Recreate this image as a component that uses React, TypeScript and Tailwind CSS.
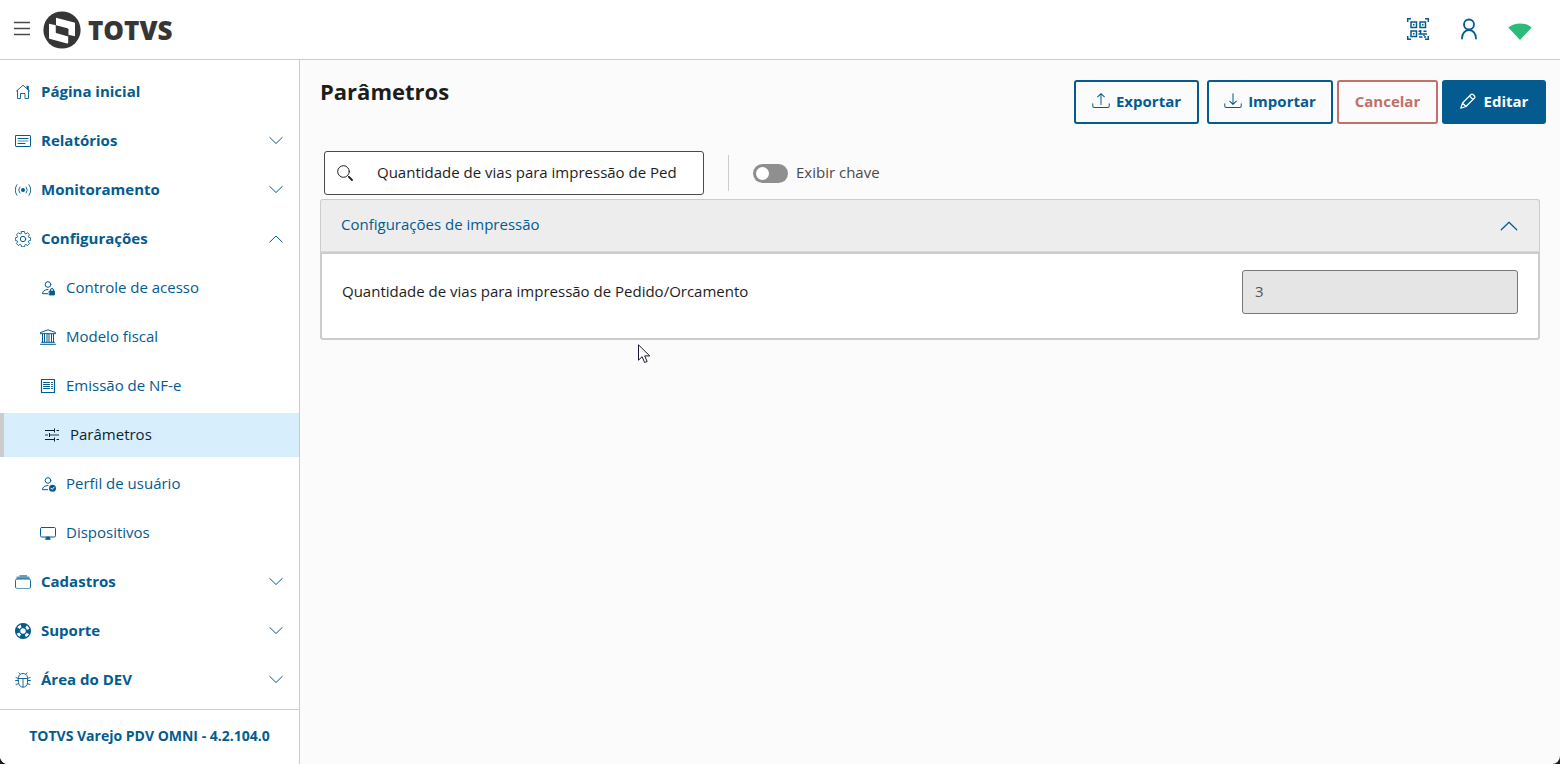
import React, { useState } from "react";

type IconProps = { className?: string; children: React.ReactNode };

function Icon({ className = "size-4", children }: IconProps) {
  return (
    <svg
      viewBox="0 0 16 16"
      className={`${className} shrink-0`}
      fill="none"
      stroke="currentColor"
      strokeLinecap="round"
      strokeLinejoin="round"
      aria-hidden="true"
    >
      {children}
    </svg>
  );
}

const HomeIcon = () => (
  <Icon>
    <path d="M1.500 7 8 1.300 14.500 7M2.500 6.500v8h3v-5h4.500v5h3.500v-8" strokeWidth=".9" />
    <path d="M12 2h1.500v4L12 4.700z" fill="currentColor" strokeWidth=".5" />
  </Icon>
);

const ReportIcon = () => (
  <Icon>
    <rect x=".5" y="2.500" width="15" height="11" rx=".6" />
    <path d="M3 5.500h10M3 10.500h7" />
    <path d="M3 8h10" opacity=".7" />
  </Icon>
);

const BroadcastIcon = () => (
  <Icon>
    <circle cx="8" cy="8" r="2" fill="currentColor" stroke="none" />
    <path d="M4.800 5a4.800 4.800 0 0 0 0 6M11.200 5a4.800 4.800 0 0 1 0 6M2 2.700a8.600 8.600 0 0 0 0 10.600M14 2.700a8.600 8.600 0 0 1 0 10.600" strokeWidth=".9" />
  </Icon>
);

const GearIcon = () => (
  <Icon>
    <circle cx="8" cy="8" r="2.700" />
    <path d="M6.600.5h2.800l.5 2 .9.400 1.800-1.100 1.900 1.900-1.100 1.800.4.900 1.900.4v2.600l-1.900.5-.4.900 1.100 1.800-1.900 1.900-1.800-1.100-.9.400-.5 2H6.600l-.5-2-.9-.4-1.800 1.100-1.900-1.900 1.100-1.800-.4-.9-1.900-.5V6.800l1.900-.4.4-.9-1.100-1.800 1.900-1.900 1.800 1.100.9-.4z" strokeWidth=".9" />
  </Icon>
);

const UserLockIcon = () => (
  <Icon>
    <circle cx="8" cy="4.500" r="2.800" />
    <path d="M8 9.500c-3.500 0-5.500 1.800-5.500 4.200h5.200" />
    <rect x="9.500" y="11" width="5" height="4" fill="currentColor" strokeWidth=".8" />
    <path d="M10.500 11v-1a1.500 1.500 0 0 1 3 0v1" />
  </Icon>
);

const UserCheckIcon = () => (
  <Icon>
    <circle cx="8" cy="4.500" r="2.800" />
    <path d="M8 9.500c-3.500 0-5.500 1.800-5.500 4.200h5.200" />
    <circle cx="12.500" cy="12.200" r="3.500" fill="currentColor" stroke="none" />
    <path d="m11 12.200 1.200 1.200 1.900-2.200" stroke="#fff" />
  </Icon>
);

const BankIcon = () => (
  <Icon>
    <path d="M.5 3.500 8 .8l7.500 2.700v1.200H.5z" />
    <path d="M2.500 5v8M4.500 5v8M7 5v8M9 5v8M11.500 5v8M13.500 5v8M1.500 13.300h13M.5 15.300h15" />
  </Icon>
);

const InvoiceIcon = () => (
  <Icon>
    <rect x="1.500" y="1.500" width="13" height="13" strokeWidth="1.200" />
    <path d="M3.500 4.500h6M3.500 6.500h6M3.500 8.500h6M3.500 10.500h6M11.500 4.500h1M11.500 6.500h1M11.500 8.500h1M11.500 10.500h1" />
  </Icon>
);

const SlidersIcon = () => (
  <Icon>
    <path d="M1 3.500h9M12.500 3.500H15M1 12.500h9M12.500 12.500H15M10.500 1.500v4M5.500 6v4M10.500 10.500v4" strokeLinecap="butt" />
    <path d="M1 8h3M5.500 8H15" strokeLinecap="butt" strokeWidth="1.500" opacity=".6" />
  </Icon>
);

const DisplayIcon = () => (
  <Icon>
    <rect x=".5" y="2.500" width="15" height="9.500" rx="1.200" />
    <path d="M6.500 12h3l.8 2.500H5.700z" fill="currentColor" strokeWidth=".6" />
  </Icon>
);

const CollectionIcon = () => (
  <Icon>
    <path d="M4.500 1h7.500v1.500h2.500V5h-13V2.500h3z" fill="currentColor" stroke="none" opacity=".6" />
    <path d="M.5 13V6.500a1.500 1.500 0 0 1 1.500-1.500h12A1.500 1.500 0 0 1 15.500 6.500V13" strokeWidth=".9" />
    <path d="M.5 13a1.500 1.500 0 0 0 1.500 1.500h12a1.500 1.500 0 0 0 1.500-1.500" opacity=".6" />
  </Icon>
);

const LifebuoyIcon = () => (
  <Icon>
    <circle cx="8" cy="8" r="7.400" strokeWidth="1.200" />
    <circle cx="8" cy="8" r="3.300" strokeWidth="1.200" />
    <circle cx="8" cy="8" r="5.400" strokeWidth="4.200" strokeDasharray="5.200 3.282" strokeDashoffset="2.600" strokeLinecap="butt" />
  </Icon>
);

const BugIcon = () => (
  <Icon>
    <path d="M3.500 6.500h9v4.200a4.500 4.500 0 0 1-9 0zM3.500 6.500v-1a4.500 4 0 0 1 9 0v1M8 6.500v8.500M3.500 8.500h-3M12.500 8.500h3M3.500 6.500l-2.500-1M12.500 6.500l2.500-1M3.700 11.500l-2.700 1M12.300 11.500l2.700 1M5 2 4 .8M11 2l1-1.200" strokeWidth=".9" />
  </Icon>
);

const Chevron = ({ up = false, className = "size-4" }: { up?: boolean; className?: string }) => (
  <Icon className={className}>
    <path d={up ? "m1.800 11 6.200-6 6.200 6" : "m1.800 4.500 6.200 6 6.200-6"} />
  </Icon>
);

function TrayIcon({ down = false }: { down?: boolean }) {
  return (
    <Icon className="size-[18px]">
      <path d="M.7 10.500v2a1.300 1.300 0 0 0 1.300 1.300h12a1.300 1.300 0 0 0 1.300-1.300v-2" strokeWidth=".9" />
      <path d={down ? "M8 1.500v9.500M5 8.200 8 11l3-2.800" : "M8 11V1.500M5 4.300 8 1.500l3 2.800"} strokeWidth=".9" />
    </Icon>
  );
}

const PencilIcon = () => (
  <Icon>
    <path d="m.8 15.200 1.700-5.200L11 1.500a1.400 1.400 0 0 1 2 0l1.500 1.500a1.400 1.400 0 0 1 0 2L6 13.500zM9.500 3l3.500 3.500M2.500 10l3.500 3.500" strokeWidth="1.200" />
  </Icon>
);

const SearchIcon = () => (
  <Icon>
    <circle cx="6.500" cy="6.500" r="5.800" />
    <path d="m10.800 10.800 1.200 1.200" />
    <path d="m12 12 3 3" strokeWidth="1.800" />
  </Icon>
);

function QrIcon() {
  return (
    <svg viewBox="0 0 24 24" className="size-6" fill="none" stroke="currentColor" strokeWidth="1.500" aria-hidden="true">
      <path d="M1.700 5V1.700H5M19 1.700h3.300V5M22.300 19v3.300H19M5 22.300H1.700V19" />
      <path d="M5 5h5.500v5.500H5zM14 5h5.500v5.500H14zM5 14h5.500v5.500H5z" />
      <path d="M7 7.750h1.500M16 7.750h1.500M7 16.750h1.500" />
      <path d="M12.500 14.200h3M17.500 14.200h3M14.500 13v4M12.500 17h4.500M18 16v3M19 17h2M13 20h3.500M18 20h2" />
    </svg>
  );
}

function UserIcon() {
  return (
    <svg viewBox="0 0 24 24" className="size-6" fill="none" stroke="currentColor" strokeWidth="1.800" strokeLinecap="round" aria-hidden="true">
      <circle cx="12" cy="7.500" r="5" />
      <path d="M5 21.500c0-5 3-8.500 7-8.500s7 3.500 7 8.500" />
    </svg>
  );
}

function LogoMark() {
  return (
    <svg viewBox="0 0 38 38" className="size-[38px] shrink-0" aria-hidden="true">
      <circle cx="19" cy="19" r="18.600" fill="#363636" />
      <path d="M13 6.700 31.300 11.500Q32 11.700 32 12.600V25.200L25.200 23.700V31.500Q25 32.800 24 32.400L6.500 27.800Q6 27.600 6 27V12.800L13 14.200z" fill="#fff" />
      <path d="M13 14.200 24.500 17.200Q25.200 17.500 25.200 18.300V25.400L13 22z" fill="#363636" />
      <path d="M13 14V21.500M25.200 18v6" stroke="#363636" strokeWidth=".5" />
    </svg>
  );
}

const items = [
  { label: "Página inicial", icon: HomeIcon },
  { label: "Relatórios", icon: ReportIcon, group: true },
  { label: "Monitoramento", icon: BroadcastIcon, group: true },
  { label: "Configurações", icon: GearIcon, group: true, open: true },
  { label: "Controle de acesso", icon: UserLockIcon, sub: true },
  { label: "Modelo fiscal", icon: BankIcon, sub: true },
  { label: "Emissão de NF-e", icon: InvoiceIcon, sub: true },
  { label: "Parâmetros", icon: SlidersIcon, sub: true, active: true },
  { label: "Perfil de usuário", icon: UserCheckIcon, sub: true },
  { label: "Dispositivos", icon: DisplayIcon, sub: true },
  { label: "Cadastros", icon: CollectionIcon, group: true },
  { label: "Suporte", icon: LifebuoyIcon, group: true },
  { label: "Área do DEV", icon: BugIcon, group: true },
];

function NavItem({ item }: { item: (typeof items)[number] }) {
  const Glyph = item.icon;
  const content = (
    <>
      <Glyph />
      <span className="pb-0.5">{item.label}</span>
    </>
  );
  if (item.group) {
    return (
      <button type="button" aria-expanded={!!item.open} className="flex h-11 w-full items-center gap-2.5 px-[15px] text-left font-bold">
        {content}
        <span className="ml-auto"><Chevron up={item.open} /></span>
      </button>
    );
  }
  if (item.active) {
    return (
      <a href="#parametros" aria-current="page" className="flex h-11 items-center gap-2.5 border-l-4 border-[#cccccc] bg-[#d7effd] pl-10 text-[#0b1f33]">
        {content}
      </a>
    );
  }
  return (
    <a href="#" className={item.sub ? "flex h-11 items-center gap-2.5 pl-10" : "flex h-11 items-center gap-2.5 pl-[15px] font-bold"}>
      {content}
    </a>
  );
}

export default function App() {
  const [query, setQuery] = useState("Quantidade de vias para impressão de Pedido/Orcamento");
  const [showKey, setShowKey] = useState(false);

  return (
    <div className="min-h-screen bg-[#1c1c1c] font-['Open_Sans','Noto_Sans',sans-serif] text-[15px] leading-6 text-[#1d1d1d]">
      <div className="flex min-h-screen flex-col overflow-hidden rounded-b-lg bg-[#fbfbfb]">
        <header className="flex h-[60px] items-center border-b border-[#cccccc] bg-white pr-7 pb-0.5 pl-3.5">
          <button type="button" aria-label="Menu" className="text-[#4a4a4a]">
            <svg viewBox="0 0 16 16" className="size-4" stroke="currentColor" strokeWidth="1.500" aria-hidden="true">
              <path d="M0 1.500h16M0 7.500h16M0 13.500h16" />
            </svg>
          </button>
          <a href="#" className="ml-[13px] flex items-center gap-[7px] pt-0.5 text-[#363636]">
            <LogoMark />
            <span className="text-[26px] leading-8 font-extrabold">TOTVS</span>
          </a>
          <div className="ml-auto flex items-center gap-[27px] text-[#045b8f]">
            <button type="button" aria-label="QR Code"><QrIcon /></button>
            <button type="button" aria-label="Usuário"><UserIcon /></button>
            <svg viewBox="0 0 24 24" className="size-6" role="img" aria-label="Conectado">
              <path d="M.3 10.500C7 5 17 5 23.700 10.500L12 23z" fill="#2cbb78" />
            </svg>
          </div>
        </header>

        <div className="flex grow">
          <aside className="flex w-[300px] shrink-0 flex-col border-r border-[#cccccc] bg-white text-[#045b8f]">
            <nav className="flex flex-col gap-[5px] pt-2.5 pb-[7px]">
              {items.map((item) => (
                <NavItem key={item.label} item={item} />
              ))}
            </nav>
            <footer className="flex grow items-center justify-center border-t border-[#cccccc] pb-0.5 text-sm font-bold">
              TOTVS Varejo PDV OMNI - 4.2.104.0
            </footer>
          </aside>

          <main className="relative min-w-0 grow px-5 pt-5">
            <div className="-mr-1.5 flex items-start">
              <h1 className="text-[22px] leading-[22px] font-bold">Parâmetros</h1>
              <div className="ml-auto flex gap-1 font-bold text-[#045b8f]">
                <button type="button" className="mr-1 flex h-11 w-[125px] items-center justify-center gap-1.5 rounded-[3px] border-2 border-[#045b8f] pb-0.5">
                  <TrayIcon />
                  Exportar
                </button>
                <button type="button" className="flex h-11 w-[126px] items-center justify-center gap-1.5 rounded-[3px] border-2 border-[#045b8f] pb-0.5">
                  <TrayIcon down />
                  Importar
                </button>
                <button type="button" className="flex h-11 w-[101px] items-center justify-center rounded-[3px] border-2 border-[#c1706c] pb-0.5 text-[#c1706c]">
                  Cancelar
                </button>
                <button type="button" className="flex h-11 w-[104px] items-center justify-center gap-2 rounded-[3px] bg-[#045b8f] pb-0.5 text-white">
                  <PencilIcon />
                  Editar
                </button>
              </div>
            </div>

            <div className="mt-[27px] flex items-center pl-1">
              <label className="flex h-11 w-[380px] items-center rounded-[3px] border border-[#4a4a4a] bg-white pr-[27px] pl-3">
                <SearchIcon />
                <input
                  type="text"
                  aria-label="Pesquisar parâmetro"
                  value={query}
                  onChange={(e) => setQuery(e.target.value)}
                  className="ml-6 min-w-0 grow bg-transparent pb-0.5 outline-none"
                />
              </label>
              <div className="ml-6 h-9 w-px bg-[#cccccc]" />
              <label className="ml-6 flex items-center gap-2 text-[#4a4a4a]">
                <input
                  type="checkbox"
                  role="switch"
                  checked={showKey}
                  onChange={(e) => setShowKey(e.target.checked)}
                  className="h-[19px] w-[35px] appearance-none rounded-full bg-[#8f8f8f] p-[3px] before:block before:size-[13px] before:rounded-full before:bg-white checked:bg-[#045b8f] checked:before:ml-4"
                />
                <span className="pb-0.5">Exibir chave</span>
              </label>
            </div>

            <section className="mt-1">
              <button type="button" aria-expanded="true" className="flex h-[53px] w-full items-center justify-between rounded-t-[3px] border border-b-[#d8d8d8] border-[#cccccc] bg-[#ededed] px-5 text-[#045b8f]">
                <span className="pb-1">Configurações de impressão</span>
                <Chevron up className="size-5" />
              </button>
              <div className="flex justify-between rounded-b-[3px] border-2 border-[#cccccc] bg-white px-5 pt-4 pb-6">
                <label htmlFor="copies" className="pt-[9px]">
                  Quantidade de vias para impressão de Pedido/Orcamento
                </label>
                <input id="copies" type="text" defaultValue="3" disabled className="h-11 w-[276px] rounded-[3px] border border-[#777777] bg-[#e5e5e5] px-3 pb-0.5 text-[#555555]" />
              </div>
            </section>

            <svg viewBox="0 0 13 20" className="absolute top-[284px] left-[338px] h-5 w-[13px]" aria-hidden="true">
              <path d="M.5.800v15.400l3.600-3.500 2.500 5.800 2.500-1.100-2.400-5.500h5z" fill="#fff" stroke="#1a1a2e" />
            </svg>
          </main>
        </div>
      </div>
    </div>
  );
}
